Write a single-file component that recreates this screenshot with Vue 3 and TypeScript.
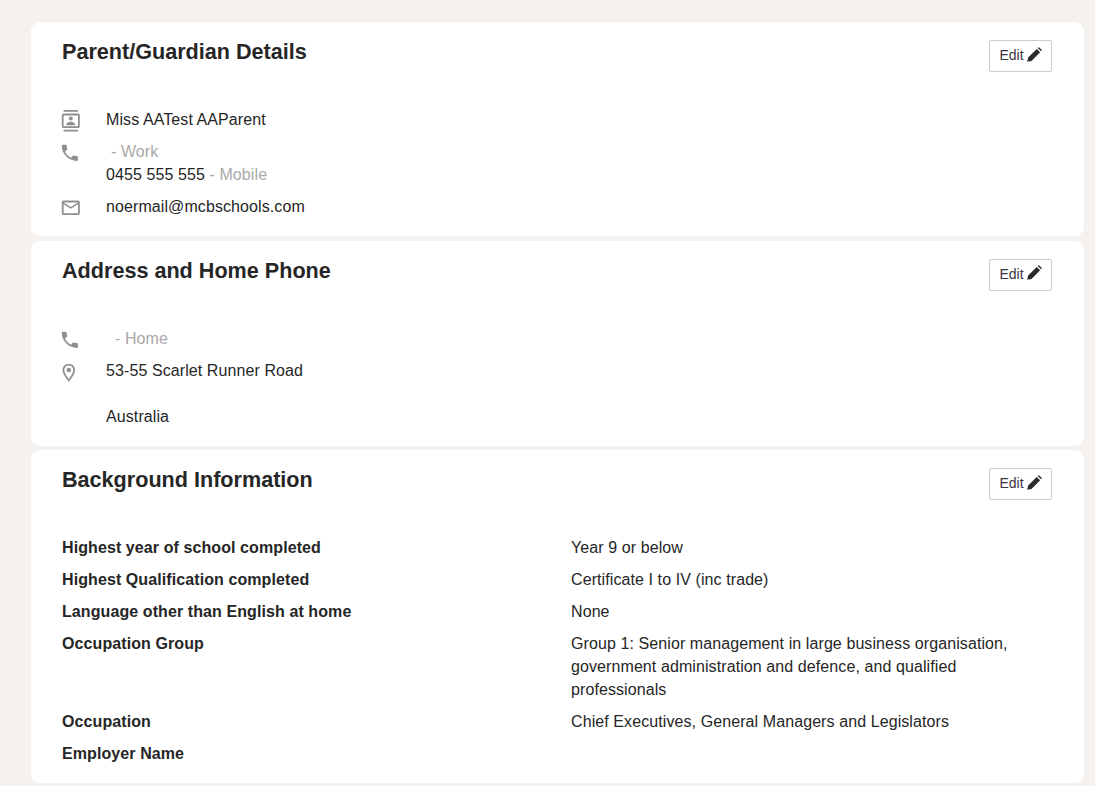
<script setup lang="ts">
interface Row { label: string; lines: string[] }
const rows: Row[] = [
  { label: 'Highest year of school completed', lines: ['Year 9 or below'] },
  { label: 'Highest Qualification completed', lines: ['Certificate I to IV (inc trade)'] },
  { label: 'Language other than English at home', lines: ['None'] },
  { label: 'Occupation Group', lines: ['Group 1: Senior management in large business organisation,', 'government administration and defence, and qualified', 'professionals'] },
  { label: 'Occupation', lines: ['Chief Executives, General Managers and Legislators'] },
  { label: 'Employer Name', lines: [] },
]
const phone = 'M6.62 10.79c1.44 2.83 3.76 5.14 6.59 6.59l2.2-2.2c.27-.27.67-.36 1.02-.24 1.12.37 2.33.57 3.57.57.55 0 1 .45 1 1V20c0 .55-.45 1-1 1-9.39 0-17-7.61-17-17 0-.55.45-1 1-1h3.5c.55 0 1 .45 1 1 0 1.25.2 2.45.57 3.57.11.35.03.74-.25 1.02l-2.2 2.2z'
const pencil = 'M0.2 15.8 L1.2 11.2 L10.4 2 L14 5.6 L4.8 14.8 Z M11.4 1 L12 .4 Q12.5 0 13 .4 L15.6 3 Q16 3.500 15.6 4 L15 4.600 Z'
</script>

<template>
  <main class="page">
    <section class="card first">
      <header class="head">
        <h2>Parent/Guardian Details</h2>
        <button class="edit" type="button">Edit <svg viewBox="0 0 16 16"><path :d="pencil" /></svg></button>
      </header>
      <div class="contact">
        <svg class="icon" viewBox="0 0 24 24"><path d="M20 0H4v2h16V0zM4 24h16v-2H4v2zM20 4H4c-1.100 0-2 .9-2 2v12c0 1.100.9 2 2 2h16c1.100 0 2-.9 2-2V6c0-1.100-.9-2-2-2zm0 14H4V6h16v12zm-8-6.250c1.240 0 2.250-1.010 2.250-2.250S13.240 7.250 12 7.250 9.750 8.260 9.750 9.500s1.010 2.250 2.250 2.250zM17 16.500c0-2.090-3.310-3.500-5-3.500s-5 1.410-5 3.500V17h10v-.5z" /></svg>
        <div class="text">Miss AATest AAParent</div>
        <svg class="icon phone" viewBox="0 0 24 24"><path :d="phone" /></svg>
        <div class="text">
          <div class="muted indent-work">- Work</div>
          <div>0455 555 555 <span class="muted">- Mobile</span></div>
        </div>
        <svg class="icon" viewBox="0 0 24 24"><path d="M22 6c0-1.100-.9-2-2-2H4c-1.100 0-2 .9-2 2v12c0 1.100.9 2 2 2h16c1.100 0 2-.9 2-2V6zm-2 0-8 5-8-5h16zm0 12H4V8l8 5 8-5v10z" /></svg>
        <div class="text">noermail@mcbschools.com</div>
      </div>
    </section>

    <section class="card second">
      <header class="head">
        <h2>Address and Home Phone</h2>
        <button class="edit" type="button">Edit <svg viewBox="0 0 16 16"><path :d="pencil" /></svg></button>
      </header>
      <div class="contact">
        <svg class="icon phone" viewBox="0 0 24 24"><path :d="phone" /></svg>
        <div class="text muted indent-home">- Home</div>
        <svg class="icon pin" viewBox="0 0 24 24"><path d="M12 2C8.130 2 5 5.130 5 9c0 5.250 7 13 7 13s7-7.750 7-13c0-3.870-3.130-7-7-7zM7 9c0-2.760 2.240-5 5-5s5 2.240 5 5c0 2.880-2.880 7.190-5 9.880C9.920 16.210 7 11.850 7 9z" /><circle cx="12" cy="9" r="2.500" /></svg>
        <div class="text">
          <div>53-55 Scarlet Runner Road</div>
          <div class="blank"></div>
          <div>Australia</div>
        </div>
      </div>
    </section>

    <section class="card third">
      <header class="head">
        <h2>Background Information</h2>
        <button class="edit" type="button">Edit <svg viewBox="0 0 16 16"><path :d="pencil" /></svg></button>
      </header>
      <dl class="facts">
        <div v-for="row in rows" :key="row.label" class="fact">
          <dt>{{ row.label }}</dt>
          <dd><div v-for="line in row.lines" :key="line">{{ line }}</div></dd>
        </div>
      </dl>
    </section>
  </main>
</template>

<style>
html, body { margin: 0; background: #f4f1ee; overflow: hidden; }
</style>

<style scoped>
.page {
  display: flex;
  flex-direction: column;
  gap: 4.5px;
  width: 1053px;
  margin-left: 31px;
  padding-top: 22px;
  font-family: "Liberation Sans", Arial, sans-serif;
  font-size: 16px;
  line-height: 23px;
  letter-spacing: 0.09px;
  color: #262626;
}
.card {
  box-sizing: border-box;
  background: #fff;
  border-radius: 9px;
  padding: 18px 32px 0 31px;
}
.first { height: 214.4px; }
.second { height: 204.7px; }
.third { height: 333px; }
.head {
  display: flex;
  justify-content: space-between;
  align-items: flex-start;
  height: 68px;
}
h2 {
  margin: 0;
  font-size: 21.6px;
  line-height: 24px;
  font-weight: 700;
  letter-spacing: 0;
}
.edit {
  display: flex;
  align-items: center;
  justify-content: center;
  gap: 3px;
  box-sizing: border-box;
  width: 63px;
  height: 32px;
  padding: 0 0 2px;
  border: 1px solid #ccc;
  border-radius: 2px;
  background: #fff;
  color: #3b3346;
  font: 14px "Liberation Sans", Arial, sans-serif;
}
.edit svg { width: 15px; height: 15px; margin-top: -2px; fill: #2b2b2b; }
.contact {
  display: grid;
  grid-template-columns: 44px 1fr;
  row-gap: 9px;
}
.icon { width: 21.6px; height: 21.6px; margin: 2.3px 0 -4px -1.8px; fill: #8f8f8f; }
.phone { margin-left: -2.6px; }
.pin { margin-top: 3px; margin-left: -4.3px; }
.muted { color: #a9a9a9; }
.indent-work { padding-left: 5px; }
.indent-home { padding-left: 9px; }
.blank { height: 23px; }
.facts { margin: 0; display: flex; flex-direction: column; gap: 9px; }
.fact { display: grid; grid-template-columns: 509px 1fr; min-height: 23px; }
dt { font-weight: 700; }
dd { margin: 0; }
</style>
